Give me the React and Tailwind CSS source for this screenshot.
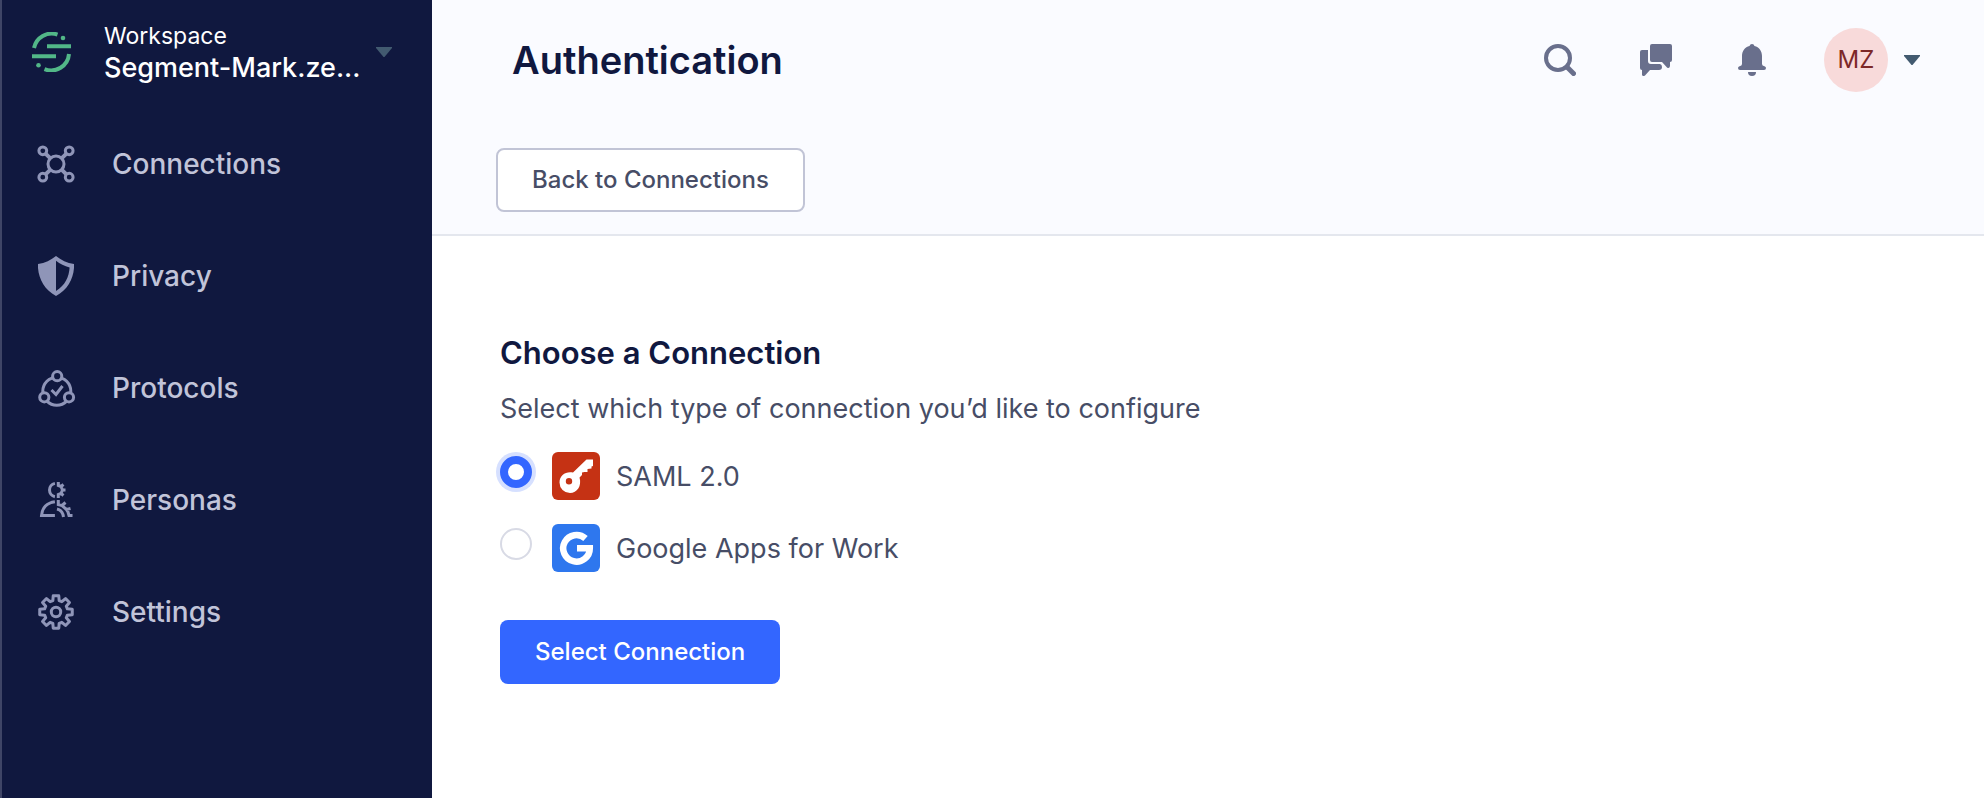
const gear = (cx, cy, outer, inner, teeth) => {
  const pts = [];
  for (let i = 0; i < teeth; i++) {
    const a = (i * 2 * Math.PI) / teeth - Math.PI / 2;
    [[-0.27, inner], [-0.17, outer], [0.17, outer], [0.27, inner]].forEach(([d, r]) =>
      pts.push(`${(cx + r * Math.cos(a + d)).toFixed(2)} ${(cy + r * Math.sin(a + d)).toFixed(2)}`)
    );
  }
  return `M${pts.join("L")}Z`;
};

const stroke = { fill: "none", stroke: "currentColor", strokeWidth: 3 };

function NavIcon({ children }) {
  return (
    <svg viewBox="0 0 40 40" className="size-10 shrink-0 text-[#8f95b8]" aria-hidden="true">
      {children}
    </svg>
  );
}

const ConnectionsIcon = () => (
  <NavIcon>
    <g {...stroke}>
      <circle cx="20" cy="20" r="8" />
      {[[6.8, 6.8], [33.2, 6.8], [6.8, 33.2], [33.2, 33.2]].map(([x, y]) => (
        <circle key={`${x}-${y}`} cx={x} cy={y} r="3.9" />
      ))}
      <path strokeWidth="4" d="M9.8 9.8l4.6 4.6M30.2 9.8l-4.6 4.6M9.8 30.2l4.6-4.6M30.2 30.2l-4.6-4.6" />
    </g>
  </NavIcon>
);

const PrivacyIcon = () => (
  <NavIcon>
    <path
      fill="currentColor"
      fillRule="evenodd"
      d="M20 0C25 4 31 7 38 8V12C37 24 31 34 20 40C9 34 3 24 2 12V8C9 7 15 4 20 0ZM20 4.8V35C29 29.5 33 21 33.6 11.5C28.5 10.3 24 8 20 4.8Z"
    />
  </NavIcon>
);

const ProtocolsIcon = () => (
  <NavIcon>
    <g {...stroke}>
      <circle cx="20.8" cy="23.2" r="14" />
      <g fill="#10183f">
        <circle cx="21.2" cy="8.2" r="4.6" />
        <circle cx="8.3" cy="29.3" r="4.6" />
        <circle cx="33" cy="29.3" r="4.6" />
      </g>
      <path d="M15.5 22L20 26.500L26.500 18" />
    </g>
  </NavIcon>
);

const PersonasIcon = () => (
  <NavIcon>
    <g {...stroke}>
      <path d="M18.900 3.400A6.800 6.800 0 0 0 18.900 16.700" />
      <path d="M18.900 21.700C11 22.700 6 28 5.500 35.500H18.900" />
      <path d="M22.300 2V5.500L25 6.500M22.300 18V14.500L25 13.500M25 6.500L27.500 4.500M25 6.500L26.500 10L25 13.500L27.500 15.500M26.500 10H29.500" />
      <path d="M22.300 20V24.500L26 25.500L30 29L32 32L33 35.500H36.500M26 25.500L29.500 22.500M30.500 29.500L34.500 28.500" />
      <path d="M21 29C25 30 27 32.500 27.500 37" />
    </g>
  </NavIcon>
);

const SettingsIcon = () => (
  <NavIcon>
    <g {...stroke}>
      <path strokeLinejoin="round" d={gear(20, 20, 16.5, 11.8, 8)} />
      <circle cx="20" cy="20" r="4.7" />
    </g>
  </NavIcon>
);

const NAV = [
  ["Connections", ConnectionsIcon],
  ["Privacy", PrivacyIcon],
  ["Protocols", ProtocolsIcon],
  ["Personas", PersonasIcon],
  ["Settings", SettingsIcon],
];

function Caret({ className }) {
  return (
    <svg viewBox="0 0 16 10" className={`h-2.5 w-4 shrink-0 ${className}`} aria-hidden="true">
      <path fill="currentColor" d="M0 0H16V1L8.500 10H7.500L0 1Z" />
    </svg>
  );
}

function Sidebar() {
  return (
    <aside className="w-[432px] shrink-0 border-l-2 border-[#3f4566] bg-[#10183f]">
      <button type="button" className="flex h-26 w-full items-center pl-[30px] pr-10 text-left">
        <svg viewBox="0 0 40 40" className="size-10 shrink-0" aria-hidden="true">
          <g fill="none" stroke="#52b788" strokeWidth="4">
            <path d="M2 16A18 18 0 0 1 25.500 2.600" />
            <path d="M37 22A18 18 0 0 1 12.500 37.200" />
            <path d="M15 14.300H39M0 24.300H24" />
          </g>
          <circle cx="31" cy="6" r="2.300" fill="#52b788" />
          <circle cx="6.500" cy="33.300" r="2.300" fill="#52b788" />
        </svg>
        <span className="ml-8 flex min-w-0 flex-1 flex-col text-white">
          <span className="text-[23px] leading-8">Workspace</span>
          <span className="text-[27px] leading-8 font-medium">Segment-Mark.ze...</span>
        </span>
        <Caret className="text-[#425a70]" />
      </button>
      <nav className="flex flex-col pt-1">
        {NAV.map(([label, Icon]) => (
          <a
            key={label}
            href={`#${label.toLowerCase()}`}
            className="flex h-28 items-center gap-9 pl-[34px] text-[28px] font-medium text-[#c1c4d9]"
          >
            <Icon />
            {label}
          </a>
        ))}
      </nav>
    </aside>
  );
}

function Header() {
  return (
    <header className="border-b-2 border-[#e4e7ee] bg-[#fafbff] pb-[22px]">
      <div className="flex h-[120px] items-center justify-between pl-20 pr-16">
        <h1 className="text-[38px] font-semibold text-[#10183f]">Authentication</h1>
        <div className="flex items-center text-[#696f8c]">
          <button type="button" aria-label="Search" className="mr-16">
            <svg viewBox="0 0 32 32" className="size-8" fill="none" stroke="currentColor" strokeWidth="4">
              <circle cx="14" cy="14" r="12" />
              <path strokeWidth="5" strokeLinecap="round" d="M23.500 23.500L29.500 29.500" />
            </svg>
          </button>
          <button type="button" aria-label="Messages" className="mr-16">
            <svg viewBox="0 0 32 32" className="size-8" fill="currentColor">
              <path d="M12 0H30Q32 0 32 2V16Q32 18 30 18V22Q29.500 25 27 23.500L22 18H12Q10 18 10 16V2Q10 0 12 0Z" />
              <path d="M2 6H8V17Q8 20 11 20H20Q22 20.500 22 23Q22 26 19 26H10L5 31.500Q3 33 2 31V26Q0 26 0 24V8Q0 6 2 6Z" />
            </svg>
          </button>
          <button type="button" aria-label="Notifications" className="mr-14">
            <svg viewBox="0 0 32 32" className="size-8" fill="currentColor">
              <path d="M16 0Q18 0 18.500 2C23 3 26 7 26 12V20Q26 22 28.500 22.300Q30 22.800 30 24Q30 26 28 26H4Q2 26 2 24Q2 22.800 3.500 22.300Q6 22 6 20V12C6 7 9 3 13.500 2Q14 0 16 0Z" />
              <path d="M12 28H20A4 4 0 0 1 12 28Z" />
            </svg>
          </button>
          <button type="button" aria-label="Account menu" className="flex items-center gap-4">
            <span className="flex size-16 items-center justify-center rounded-full bg-[#f8dada] text-[24px] text-[#7d2828]">
              MZ
            </span>
            <Caret className="text-[#425a70]" />
          </button>
        </div>
      </div>
      <div className="px-16 pt-7">
        <button
          type="button"
          className="h-16 rounded-lg border-2 border-[#c1c4d6] bg-white px-[34px] text-[24px] font-medium text-[#474d66]"
        >
          Back to Connections
        </button>
      </div>
    </header>
  );
}

const SamlLogo = () => (
  <svg viewBox="0 0 48 48" className="size-12 shrink-0" aria-hidden="true">
    <rect width="48" height="48" rx="6" fill="#c53214" />
    <path
      fill="#fff"
      fillRule="evenodd"
      d="M34.500 7.500H41V14L39.500 14.500V16.500L35.500 17V20H32.500L30 20.500V23L27.500 25.500C30 34 25 41 18 41A10.500 10.500 0 0 1 7.500 30.500C7.500 23 14 19 21 20.500ZM17 26A3.200 3.200 0 1 0 17 32.400A3.200 3.200 0 1 0 17 26Z"
    />
  </svg>
);

const GoogleLogo = () => (
  <svg viewBox="0 0 48 48" className="size-12 shrink-0" aria-hidden="true">
    <rect width="48" height="48" rx="6" fill="#2e77ee" />
    <path
      fill="none"
      stroke="#fff"
      strokeWidth="6.500"
      d="M33.500 14.500A13.300 13.300 0 1 0 37.800 24.200H25"
    />
  </svg>
);

const OPTIONS = [
  ["saml", "SAML 2.0", SamlLogo],
  ["google", "Google Apps for Work", GoogleLogo],
];

function ConnectionForm() {
  return (
    <form className="flex flex-col items-start px-[68px] pt-[97px]" onSubmit={(e) => e.preventDefault()}>
      <h2 className="text-[31px] leading-10 font-semibold text-[#10183f]">Choose a Connection</h2>
      <p className="mt-4 text-[27px] leading-10 text-[#474d66]">
        Select which type of connection you’d like to configure
      </p>
      <div className="mt-[23px] flex flex-col gap-6">
        {OPTIONS.map(([value, label, Logo], i) => (
          <label key={value} htmlFor={value} className="flex items-center text-[27px] leading-10 text-[#474d66]">
            <input
              id={value}
              type="radio"
              name="connection"
              value={value}
              defaultChecked={i === 0}
              className="mb-2 mr-5 size-8 shrink-0 appearance-none rounded-full border-2 border-[#d8dae5] bg-white checked:border-8 checked:border-[#3366ff] checked:ring-4 checked:ring-[#d6e0ff]"
            />
            <Logo />
            <span className="ml-4 pt-0.5">{label}</span>
          </label>
        ))}
      </div>
      <button
        type="submit"
        className="mt-12 h-16 rounded-lg bg-[#3366ff] px-[35px] text-[24px] font-medium text-white"
      >
        Select Connection
      </button>
    </form>
  );
}

export default function App() {
  return (
    <div className="flex min-h-screen bg-white font-['Inter',sans-serif]">
      <Sidebar />
      <main className="min-w-0 flex-1">
        <Header />
        <ConnectionForm />
      </main>
    </div>
  );
}
